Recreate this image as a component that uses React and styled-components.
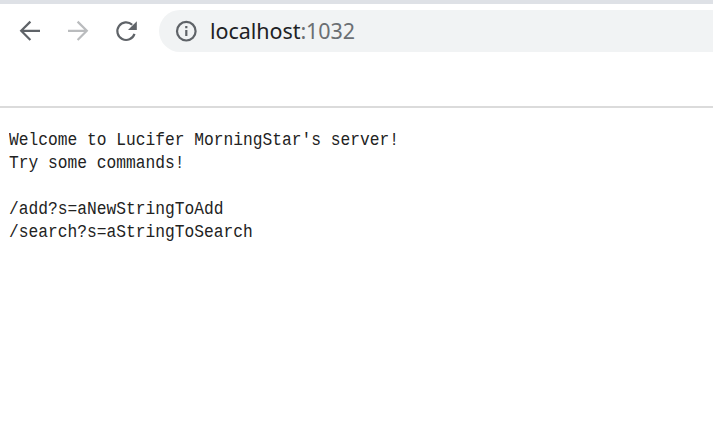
import React from "react";
import styled, { createGlobalStyle } from "styled-components";

const GlobalStyle = createGlobalStyle`
  body { margin: 0; background: #fff; overflow: hidden; }
`;

const Browser = styled.div`
  display: flex;
  flex-direction: column;
  width: 100%;
  height: 422px;
`;

const Toolbar = styled.header`
  box-sizing: border-box;
  display: flex;
  align-items: flex-start;
  height: 108px;
  border-top: 4px solid #dee1e6;
  border-bottom: 2px solid #dbdbdb;
  padding-top: 6px;
`;

const Navigation = styled.nav`
  display: flex;
  gap: 24px;
  width: 141px;
  padding: 9px 0 0 18px;
`;

const Icon = styled.svg`
  display: block;
  flex: none;
  width: 24px;
  height: 24px;
  fill: none;
  stroke: ${(p) => p.$color || "#5f6368"};
  stroke-width: 2.2;
`;

const AddressBar = styled.div`
  box-sizing: border-box;
  display: flex;
  align-items: center;
  flex: 1;
  height: 42px;
  padding-left: 15px;
  border-radius: 21px 0 0 21px;
  background: #f1f3f4;
`;

const Address = styled.span`
  margin-left: 12px;
  font: 21.5px/30px "Noto Sans", "Open Sans", sans-serif;
  letter-spacing: -0.05px;
  color: #202124;
  white-space: nowrap;
`;

const Port = styled.span`
  color: #6b6f73;
`;

const Content = styled.pre`
  margin: 0;
  padding: 18px 9px 0;
  font: 16.25px/20px "Liberation Mono", monospace;
  color: #222;
  transform: scaleY(1.15);
  transform-origin: top left;
`;

export default function App() {
  return (
    <>
      <GlobalStyle />
      <Browser>
        <Toolbar>
          <Navigation>
            <Icon viewBox="0 0 24 24">
              <path d="M22 11.8H3.5M12.4 2.6L3.2 11.8l9.2 9.2" />
            </Icon>
            <Icon viewBox="0 0 24 24" $color="#babcbe">
              <path d="M2 11.8h18.5M11.6 2.6l9.2 9.2-9.2 9.2" />
            </Icon>
            <Icon viewBox="0 0 24 24">
              <path d="M18.2 5.8A8.8 8.8 0 1 0 20.5 14.9" />
              <path d="M22.8 2.2v8.8H14z" fill="#5f6368" stroke="none" />
            </Icon>
          </Navigation>
          <AddressBar>
            <Icon viewBox="0 0 24 24">
              <circle cx="12.3" cy="12.2" r="9.3" />
              <path d="M12.3 11v6M12.3 7v2.2" />
            </Icon>
            <Address>
              localhost<Port>:1032</Port>
            </Address>
          </AddressBar>
        </Toolbar>
        <Content>{`Welcome to Lucifer MorningStar's server!
Try some commands!

/add?s=aNewStringToAdd
/search?s=aStringToSearch`}</Content>
      </Browser>
    </>
  );
}
